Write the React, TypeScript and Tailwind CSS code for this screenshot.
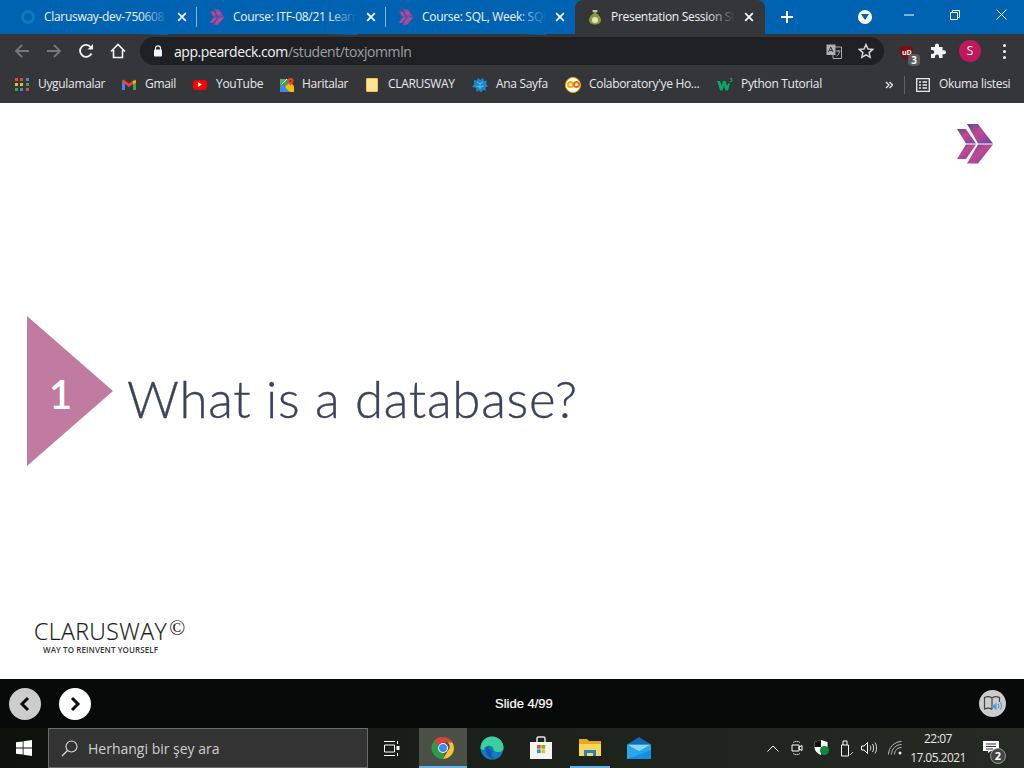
import React from "react";

const ui = "font-['Open_Sans','Noto_Sans',sans-serif]";

function Chevrons({ w = 16, h = 16, id }: { w?: number; h?: number; id: string }) {
  return (
    <svg width={w} height={h} viewBox="0 0 36 40" className="shrink-0">
      <defs>
        <linearGradient id={id} x1="0" y1="0" x2="1" y2="1">
          <stop offset="0" stopColor="#5a4aa0" />
          <stop offset="0.45" stopColor="#c2488f" />
          <stop offset="0.6" stopColor="#a8479a" />
          <stop offset="1" stopColor="#6a4aa5" />
        </linearGradient>
      </defs>
      <path d="M0 5h9l10 14.600H9z" fill={`url(#${id})`} />
      <path d="M0 35h9l10-14.400H9z" fill={`url(#${id})`} />
      <path d="M10 0h11l15 19.600H21z" fill={`url(#${id})`} />
      <path d="M10 39.500h11l15-18.900H21z" fill={`url(#${id})`} />
    </svg>
  );
}

function X({ c = "#fff" }: { c?: string }) {
  return (
    <svg width="10" height="10" viewBox="0 0 10 10">
      <path d="M1.200 1.200l7.600 7.600M8.800 1.200L1.200 8.800" stroke={c} strokeWidth="1.700" />
    </svg>
  );
}

function Tab({ icon, title, active, fade }: { icon: React.ReactNode; title: string; active?: boolean; fade: string }) {
  return (
    <div className={`relative flex items-center h-[34px] pl-3 shrink-0 ${active ? "w-[190px] bg-[#35363a] rounded-t-lg" : "w-[189px]"}`}>
      <div className="w-4 h-4 flex items-center justify-center shrink-0">{icon}</div>
      <div className="relative w-[124px] ml-2 overflow-hidden whitespace-nowrap text-[12px] leading-[34px] text-[#f1f3f4] pb-px tracking-[-0.3px]">
        {title}
        <div className={`absolute right-0 top-0 bottom-0 w-7 ${fade}`} />
      </div>
      <div className="ml-[9px] w-[10px] h-[10px] flex items-center"><X /></div>
    </div>
  );
}

function Sep() {
  return <div className="w-px h-5 bg-[#8fb4d6] -ml-px shrink-0" />;
}

function TabStrip() {
  return (
    <div className="flex items-center h-[34px] bg-[#0063b1] pl-2">
      <Tab
        fade="bg-gradient-to-r from-transparent to-[#0063b1]"
        title="Clarusway-dev-750608"
        icon={<div className="w-[14px] h-[14px] rounded-full border-[3px] border-[#1278bd] bg-transparent" />}
      />
      <Sep />
      <Tab fade="bg-gradient-to-r from-transparent to-[#0063b1]" title="Course: ITF-08/21 Learn" icon={<Chevrons id="t1" />} />
      <Sep />
      <Tab fade="bg-gradient-to-r from-transparent to-[#0063b1]" title="Course: SQL, Week: SQL" icon={<Chevrons id="t2" />} />
      <Tab
        active
        fade="bg-gradient-to-r from-transparent to-[#35363a]"
        title="Presentation Session Stu"
        icon={
          <svg width="14" height="16" viewBox="0 0 14 16">
            <path d="M5 1h4L8.400 4.400C11 6 13 8.500 13 11c0 3-2.600 4.500-6 4.500S1 14 1 11c0-2.500 2-5 4.600-6.600z" fill="#8a9a3c" />
            <circle cx="7" cy="11" r="3" fill="#e8e4b0" />
            <path d="M4.500 2h5" stroke="#d8d8c8" strokeWidth="1.400" />
          </svg>
        }
      />
      <div className="ml-[15px] w-[14px] h-[14px] flex items-center justify-center">
        <svg width="14" height="14" viewBox="0 0 14 14"><path d="M7 1v12M1 7h12" stroke="#fff" strokeWidth="2" /></svg>
      </div>
      <div className="ml-[64px] w-[14px] h-[14px] rounded-full bg-white flex items-center justify-center">
        <svg width="8" height="6" viewBox="0 0 8 6"><path d="M0 0h8L4 6z" fill="#0063b1" /></svg>
      </div>
      <div className="ml-[14px] flex self-stretch">
        <div className="w-[46px] flex items-center justify-center pb-[5px]">
          <svg width="10" height="10" viewBox="0 0 10 10"><path d="M0 5h10" stroke="#fff" /></svg>
        </div>
        <div className="w-[46px] flex items-center justify-center pb-[5px]">
          <svg width="10" height="10" viewBox="0 0 10 10" fill="none"><path d="M.5 2.500h7v7h-7zM2.500 2.500v-2h7v7h-2" stroke="#fff" /></svg>
        </div>
        <div className="w-[46px] flex items-center justify-center pb-[5px]">
          <svg width="11" height="11" viewBox="0 0 11 11"><path d="M.5.5l10 10M10.500.5l-10 10" stroke="#fff" /></svg>
        </div>
      </div>
    </div>
  );
}

function Toolbar() {
  return (
    <div className="flex items-center h-[34px] bg-[#35363a] pl-[6px]">
      <div className="w-8 flex justify-center">
        <svg width="16" height="16" viewBox="0 0 16 16" fill="none"><path d="M15 8H2M8 2L2 8l6 6" stroke="#75777a" strokeWidth="1.800" /></svg>
      </div>
      <div className="w-8 flex justify-center">
        <svg width="16" height="16" viewBox="0 0 16 16" fill="none"><path d="M1 8h13M8 2l6 6-6 6" stroke="#75777a" strokeWidth="1.800" /></svg>
      </div>
      <div className="w-8 flex justify-center">
        <svg width="16" height="16" viewBox="0 0 16 16" fill="none"><path d="M13.500 10.500A6 6 0 1 1 13 4.500" stroke="#f1f3f4" strokeWidth="1.800" /><path d="M15 1v5.500H9.500z" fill="#f1f3f4" /></svg>
      </div>
      <div className="w-8 flex justify-center">
        <svg width="16" height="16" viewBox="0 0 16 16" fill="none"><path d="M1 8.500L8 1.500l7 7M3.500 7v7.500h9V7" stroke="#f1f3f4" strokeWidth="1.600" /></svg>
      </div>
      <div className="ml-[6px] w-[744px] h-7 rounded-full bg-[#202124] flex items-center pl-[13px]">
        <svg width="10" height="12" viewBox="0 0 10 12" className="shrink-0">
          <path d="M2.500 5V3.300a2.500 2.500 0 0 1 5 0V5" stroke="#f1f3f4" strokeWidth="1.200" fill="none" />
          <rect x="1" y="4.500" width="8" height="7" rx="1" fill="#f1f3f4" />
        </svg>
        <div className="ml-[11px] text-[14px] text-[#f1f3f4] whitespace-nowrap tracking-[-0.43px]">
          app.peardeck.com<span className="text-[#9aa0a6]">/student/toxjommln</span>
        </div>
        <div className="ml-auto flex items-center">
          <svg width="16" height="15" viewBox="0 0 16 15" fill="none">
            <path d="M7 3h8.500v11.500H7z" stroke="#a8abae" />
            <rect x=".5" y=".5" width="9" height="10.500" fill="#aeb0b3" />
            <path d="M2.500 8l2.300-5L7 8M3.400 6.500h3" stroke="#35363a" />
            <path d="M10 7h4.500M12.200 6v1.500M10.500 12c2-1 2.500-2.500 3-4.500" stroke="#a8abae" />
          </svg>
          <div className="ml-4 mr-[10px]">
            <svg width="16" height="16" viewBox="0 0 16 16" fill="none"><path d="M8 1.500l2 4.500 4.800.4-3.700 3.200 1.100 4.800L8 11.900l-4.200 2.500 1.100-4.800L1.200 6.400 6 6z" stroke="#dadce0" strokeWidth="1.400" /></svg>
          </div>
        </div>
      </div>
      <div className="ml-[14px] mt-[6px] relative w-[16px] h-[18px] shrink-0">
        <svg width="15" height="15" viewBox="0 0 16 17" className="ml-px"><path d="M8 .5l7 2v6c0 4-3.500 6.500-7 8-3.500-1.500-7-4-7-8v-6z" fill="#7b0f12" /></svg>
        <div className="absolute left-[4px] top-[4px] text-[7px] leading-[7px] font-bold text-white">uD</div>
        <div className="absolute left-[10px] top-[9px] w-3 h-3 rounded-sm bg-[#5a5b5e] text-[10px] leading-3 font-bold text-white text-center">3</div>
      </div>
      <div className="ml-[16px] shrink-0">
        <svg width="16" height="16" viewBox="0 0 16 16"><path d="M5 2.500a2 2 0 0 1 4 0V4h3.500v3.300H14a2 2 0 0 1 0 4h-1.500V15H9v-1.500a2 2 0 0 0-4 0V15H1v-4h1.300a2 2 0 0 0 0-4H1V4h4z" fill="#f1f3f4" /></svg>
      </div>
      <div className="ml-[13px] w-[22px] h-[22px] rounded-full bg-[#c2185b] text-white text-[12px] leading-[22px] text-center shrink-0">S</div>
      <div className="ml-[22px] flex flex-col gap-[3px] shrink-0">
        <div className="w-[3px] h-[3px] rounded-full bg-[#f1f3f4]" />
        <div className="w-[3px] h-[3px] rounded-full bg-[#f1f3f4]" />
        <div className="w-[3px] h-[3px] rounded-full bg-[#f1f3f4]" />
      </div>
    </div>
  );
}

function Bm({ icon, label, w }: { icon: React.ReactNode; label: string; w: string }) {
  return (
    <div className={`flex items-center shrink-0 ${w}`}>
      {icon}
      <span className="whitespace-nowrap text-[12px] leading-[16px] -mt-[2px] text-[#e8eaed] tracking-[-0.32px]">{label}</span>
    </div>
  );
}

function Bookmarks() {
  const dots = ["#ea4335", "#ea4335", "#4285f4", "#fbbc05", "#fbbc05", "#34a853", "#34a853", "#4285f4", "#ea4335"];
  return (
    <div className="flex items-center h-[35px] bg-[#35363a] pl-[15px] pb-[2px]">
      <Bm
        w="w-[107px]"
        label="Uygulamalar"
        icon={
          <div className="grid grid-cols-3 gap-[2px] w-[14px] h-[14px] mr-[9px]">
            {dots.map((c, i) => <div key={i} className="w-[3px] h-[3px]" style={{ background: c }} />)}
          </div>
        }
      />
      <Bm
        w="w-[71px]"
        label="Gmail"
        icon={
          <svg width="14" height="12" viewBox="0 0 14 12" className="mr-[9px]">
            <path d="M0 1.500V11h3V5l4 3 4-3v6h3V1.500L12.500.5 7 4.500 1.500.5z" fill="#ea4335" />
            <path d="M0 3v8h3V5z" fill="#4285f4" />
            <path d="M14 3v8h-3V5z" fill="#34a853" />
            <path d="M11 2.300l3-1v2L11 5.500z" fill="#fbbc05" />
          </svg>
        }
      />
      <Bm
        w="w-[87px]"
        label="YouTube"
        icon={
          <div className="w-[14px] h-[10px] rounded-[3px] bg-[#f00] flex items-center justify-center mr-[9px]">
            <svg width="4" height="5" viewBox="0 0 4 5"><path d="M0 0l4 2.500L0 5z" fill="#fff" /></svg>
          </div>
        }
      />
      <Bm
        w="w-[86px]"
        label="Haritalar"
        icon={
          <svg width="14" height="14" viewBox="0 0 14 14" className="mr-2">
            <path d="M0 1h10v13H0z" fill="#34a853" />
            <path d="M0 14V6l5 3 5 5z" fill="#4285f4" />
            <path d="M5 9l5-5 4 4v6h-4z" fill="#fbbc05" />
            <path d="M0 6l6-5H0z" fill="#4db36a" />
            <path d="M1.500 6.500L7 1" stroke="#e8eaed" />
            <path d="M10.500 0a3 3 0 0 1 3 3c0 2-3 4.500-3 4.500S7.500 5 7.500 3a3 3 0 0 1 3-3z" fill="#ea4335" />
            <circle cx="10.500" cy="3" r="1" fill="#8a1c12" />
          </svg>
        }
      />
      <Bm
        w="w-[106px]"
        label="CLARUSWAY"
        icon={<div className="w-[12px] h-[14px] bg-[#fde293] border border-[#f0c34e] rounded-[1px] mr-[10px]" />}
      />
      <Bm
        w="w-[93px]"
        label="Ana Sayfa"
        icon={
          <svg width="16" height="16" viewBox="0 0 16 16" className="mr-2">
            <path d="M2 3l3 .5L6 1l2.500 2L11 1l1 3 3-.5-1 3.500 2 2-2.500 1.500.5 3-3-.5-2 2.500-2-2-3 1 .5-3.500L0 10l2-2.500z" fill="#1a86c8" />
            <path d="M5 5l3 2 3-2M8 7v5M4 9l4 1 4-1" stroke="#5cc0ee" fill="none" />
          </svg>
        }
      />
      <Bm
        w="w-[152px]"
        label="Colaboratory'ye Ho..."
        icon={
          <div className="w-4 h-4 rounded-full bg-[#fff] border border-[#f9ab00] flex items-center justify-center mr-2 shrink-0">
            <div className="w-[7px] h-[7px] rounded-full border-2 border-[#f9ab00] shrink-0" />
            <div className="w-[7px] h-[7px] -ml-px rounded-full border-2 border-[#e8710a] shrink-0" />
          </div>
        }
      />
      <Bm
        w="w-[168px]"
        label="Python Tutorial"
        icon={
          <div className="relative w-4 h-3 mr-2 shrink-0">
            <svg width="16" height="12" viewBox="0 0 16 12">
              <path d="M0 2h3l1.500 5L6 2h2.500l1.500 5 1-2.500h2L11 11.500H8.500L7 6.500l-1.500 5H3.200z" fill="#04aa6d" />
            </svg>
            <div className="absolute right-0 -top-[2px] text-[6px] leading-[6px] text-[#04aa6d] font-bold">3</div>
          </div>
        }
      />
      <svg width="8" height="8" viewBox="0 0 8 8" fill="none" className="shrink-0"><path d="M1 1l3 3-3 3M4.500 1l3 3-3 3" stroke="#e8eaed" strokeWidth="1.300" /></svg>
      <div className="w-px h-[18px] bg-[#5f6368] ml-[11px] shrink-0" />
      <svg width="14" height="14" viewBox="0 0 14 14" fill="none" className="ml-[11px] shrink-0">
        <path d="M.7.7h12.600v12.600H.7z" stroke="#e8eaed" strokeWidth="1.300" />
        <path d="M3 4h2M6.500 4H11M3 7h2M6.500 7H11M3 10h2M6.500 10H11" stroke="#e8eaed" strokeWidth="1.300" />
      </svg>
      <span className="ml-[9px] text-[12px] leading-[16px] -mt-[2px] text-[#e8eaed] whitespace-nowrap tracking-[-0.32px]">Okuma listesi</span>
    </div>
  );
}

function Slide() {
  return (
    <div className="h-[576px] bg-white flex flex-col">
      <div className="flex justify-end pr-[31px] pt-[21px]">
        <Chevrons w={36} h={40} id="big" />
      </div>
      <div className="flex items-start mt-[152px] pl-[27px]">
        <div className="w-[86px] h-[150px] bg-[#c27ba0] [clip-path:polygon(0_0,100%_50%,0_100%)] flex items-center pl-[22px] pt-[5px] shrink-0">
          <span className="text-white text-[40px] font-['Lato',sans-serif] font-semibold">1</span>
        </div>
        <div className="ml-[14px] mt-[48px] text-[51px] leading-[70px] font-light text-[#3c4257] whitespace-nowrap font-['Lato',sans-serif] tracking-[0.7px] [-webkit-text-stroke:0.35px_#3c4257]">
          What is a database?
        </div>
      </div>
      <div className="mt-[154px] pl-[34px] text-[#1a1a1a] font-['Open_Sans',sans-serif]">
        <div className="flex items-start h-[22px]">
          <span className="text-[23px] leading-[22px] font-light tracking-[0.45px] [-webkit-text-stroke:0.2px_#1a1a1a]">CLARUSWAY</span>
          <span className="ml-[2px] -mt-[3px] text-[21px] leading-[22px] font-['Liberation_Serif',serif]">©</span>
        </div>
        <div className="mt-[3px] ml-[9px] text-[8px] leading-[9px] font-semibold text-[#333] whitespace-nowrap tracking-[0.1px]">WAY TO REINVENT YOURSELF</div>
      </div>
    </div>
  );
}

function SlideBar() {
  return (
    <div className="h-[49px] bg-[#080a0a] flex items-center pl-[9px] pr-[18px]">
      <div className="w-8 h-8 rounded-full bg-[#cccccc] flex items-center justify-center">
        <svg width="12" height="16" viewBox="0 0 12 16" fill="none"><path d="M9 2L3 8l6 6" stroke="#0a0a0a" strokeWidth="3" /></svg>
      </div>
      <div className="w-8 h-8 ml-[18px] rounded-full bg-white flex items-center justify-center">
        <svg width="12" height="16" viewBox="0 0 12 16" fill="none"><path d="M3 2l6 6-6 6" stroke="#0a0a0a" strokeWidth="3" /></svg>
      </div>
      <div className="ml-[404px] text-[13px] text-white font-['Liberation_Sans',sans-serif] whitespace-nowrap [-webkit-text-stroke:0.2px_#fff]">Slide 4/99</div>
      <div className="ml-auto w-[27px] h-[27px] rounded-full bg-[#cccccc] flex items-center justify-center">
        <svg width="20" height="18" viewBox="0 0 20 18" fill="none">
          <path d="M9 3C7 1.500 4 1.500 1.500 2.500V14C4 13 7 13 9 14.500M9 3c2-1.500 5-1.500 7.500-.5V7M9 3v11.500" stroke="#444" strokeWidth="1.200" />
          <path d="M9 10h2l2.500-2.500v8L11 13H9z" fill="#4d9bd8" />
          <path d="M15 9c1 1 1 3 0 4M17 7.500c2 2 2 5 0 7" stroke="#4d9bd8" strokeWidth="1.200" />
        </svg>
      </div>
    </div>
  );
}

function Cell({ w, children, active }: { w: string; children: React.ReactNode; active?: boolean }) {
  return (
    <div className={`relative h-10 flex items-center justify-center shrink-0 ${w} ${active ? "bg-[#4a5046]" : ""}`}>
      {children}
    </div>
  );
}

function Underline({ w }: { w: string }) {
  return <div className={`absolute bottom-0 left-1/2 -translate-x-1/2 h-[2px] bg-[#63b1ea] ${w}`} />;
}

function Taskbar() {
  return (
    <div className={`h-10 flex items-center bg-gradient-to-r from-[#0d120c] via-[#1c2119] to-[#262a24] ${ui}`}>
      <div className="w-12 flex justify-center shrink-0">
        <svg width="16" height="16" viewBox="0 0 16 16"><path d="M0 2.300l6.700-.9v6.200H0zM7.500 1.300L16 0v7.600H7.500zM0 8.400h6.700v6.200L0 13.700zM7.500 8.400H16V16l-8.500-1.300z" fill="#fff" /></svg>
      </div>
      <div className="w-[320px] h-10 bg-[#333333] border border-[#6b6b6b] flex items-center pl-3 shrink-0">
        <svg width="17" height="17" viewBox="0 0 17 17" fill="none"><circle cx="10.500" cy="6.500" r="5.500" stroke="#ddd" strokeWidth="1.100" /><path d="M6.500 10.500L1 16" stroke="#ddd" strokeWidth="1.300" /></svg>
        <span className="ml-[10px] text-[14px] text-[#cfcfcf] whitespace-nowrap">Herhangi bir şey ara</span>
      </div>
      <div className="w-[51px] flex justify-center pr-[3px] shrink-0">
        <svg width="16" height="15" viewBox="0 0 16 15" fill="none"><path d="M0 .5h11M0 14.500h11M.5 4h10v7H.5z" stroke="#fff" /><path d="M13.500 0v3M13.500 12v3" stroke="#fff" /><rect x="12.500" y="5" width="3" height="4" fill="#fff" /></svg>
      </div>
      <Cell w="w-12" active>
        <svg width="24" height="24" viewBox="0 0 24 24">
          <path d="M12 1a11 11 0 0 1 9.500 5.500H12a5.500 5.500 0 0 0-5.200 3.700L3.500 4.500A11 11 0 0 1 12 1z" fill="#db4437" />
          <path d="M21.500 6.500A11 11 0 0 1 12 23l4.800-8.200a5.500 5.500 0 0 0 0-8.300z" fill="#fbc02d" />
          <path d="M12 23A11 11 0 0 1 3.500 4.500l4.700 8.200a5.500 5.500 0 0 0 5.800 4.400z" fill="#2e9b47" />
          <circle cx="12" cy="12" r="5" fill="#fff" />
          <circle cx="12" cy="12" r="4" fill="#4285f4" />
        </svg>
        <Underline w="w-12" />
      </Cell>
      <Cell w="w-[49px]">
        <svg width="24" height="24" viewBox="0 0 24 24">
          <circle cx="12" cy="12" r="11.500" fill="#0f7dc2" />
          <path d="M.5 12C1 5 6 .5 12 .5 18.500.500 23.500 5.500 23.500 12c0 2.500-2.500 4-5.500 4-3 0-4.500-1.500-4.500-2.500 0-3-3-4.500-6-3.500C5 10.700 4 12 4 14 1.500 14 .5 13 .5 12z" fill="#3bcf9a" />
          <path d="M13 15c-4-.5-5-3-4.500-5-2.500 1-3.500 3.500-2.500 6.500 1 3 4 6 9 6.500-4-2-4.500-5.500-2-8z" fill="#1556a8" />
        </svg>
      </Cell>
      <Cell w="w-[50px]">
        <svg width="24" height="24" viewBox="0 0 24 24">
          <path d="M8 6V2.500A1.500 1.500 0 0 1 9.500 1h5A1.500 1.500 0 0 1 16 2.500V6" fill="none" stroke="#e8e8e8" strokeWidth="1.500" />
          <path d="M1 6h22v17H1z" fill="#f4f4f4" />
          <path d="M8 9h3.700v3.700H8z" fill="#f25022" />
          <path d="M12.400 9h3.700v3.700h-3.700z" fill="#7fba00" />
          <path d="M8 13.400h3.700v3.700H8z" fill="#00a4ef" />
          <path d="M12.400 13.400h3.700v3.700h-3.700z" fill="#ffb900" />
        </svg>
      </Cell>
      <Cell w="w-[48px]">
        <svg width="22" height="20" viewBox="0 0 22 20">
          <path d="M0 1h8l2 2h12v15H0z" fill="#e6a91e" />
          <path d="M0 6h22v12H0z" fill="#fbd55c" />
          <path d="M5 12h12v6h-3v-3H8v3H5z" fill="#2b7fc4" />
        </svg>
        <Underline w="w-10" />
      </Cell>
      <Cell w="w-[49px]">
        <svg width="24" height="22" viewBox="0 0 24 22">
          <path d="M12 0l12 7.500H0z" fill="#0f6cbd" />
          <path d="M0 7.500l12 7 12-7V22H0z" fill="#28a8ea" />
          <path d="M0 7.500h24L12 14.500z" fill="#7fdcf7" />
          <path d="M0 22l24-9v9z" fill="#1490df" />
        </svg>
      </Cell>
      <div className="ml-[104px] flex items-center shrink-0">
        <svg width="12" height="7" viewBox="0 0 12 7" fill="none"><path d="M.5 6.500L6 1l5.500 5.500" stroke="#fff" /></svg>
        <svg width="12" height="16" viewBox="0 0 12 16" fill="none" className="ml-[12px]"><path d="M1 5h7v6H1zM8 7l3-1.500v5L8 9z" stroke="#fff" /><path d="M2 2.500C4 1 7 1 9 2.500M2 13.500c2 1.500 5 1.500 7 0" stroke="#bbb" /></svg>
        <div className="relative ml-[11px] w-[16px] h-[16px]">
          <svg width="14" height="15" viewBox="0 0 14 15"><path d="M7 0l6.500 2v5c0 4-3 6.500-6.500 8C3.500 13.500.500 11 .500 7V2z" fill="#fff" /><path d="M7 0v7H.5V2zM7 7h6.500c0 4-3 6.500-6.500 8z" fill="#111" /></svg>
          <div className="absolute left-[6px] top-[6px] w-[9px] h-[9px] rounded-full bg-[#10893e]" />
        </div>
        <svg width="14" height="17" viewBox="0 0 14 17" fill="none" className="ml-[10px]"><path d="M1.500 5h7v11h-7zM3 5V1h4v4" stroke="#fff" /><path d="M10 15l3-3" stroke="#bbb" /></svg>
        <svg width="16" height="12" viewBox="0 0 16 12" fill="none" className="ml-[7px]"><path d="M.5 4h2.500L6.500.5v11L3 8H.5z" stroke="#fff" /><path d="M9 3.500c1 1.500 1 3.500 0 5M11.500 2c1.500 2.500 1.500 5.500 0 8M14 .5c2 3 2 8 0 11" stroke="#ddd" /></svg>
        <svg width="14" height="14" viewBox="0 0 14 14" fill="none" className="ml-[11px]"><path d="M.5 13.500C.5 6.500 6.500.5 13.500.5M3.500 13.500c0-5.500 4.500-10 10-10M6.500 13.500c0-4 3-7 7-7" stroke="#bbb" /><circle cx="12" cy="12" r="1.500" fill="#eee" /></svg>
      </div>
      <div className="ml-[2px] w-[68px] text-center text-[#e6e6e6] text-[12px] leading-[19px] shrink-0 tracking-[-0.55px]">
        <div>22:07</div>
        <div>17.05.2021</div>
      </div>
      <div className="relative ml-[11px] w-[18px] h-[16px] shrink-0">
        <svg width="16" height="12" viewBox="0 0 16 12" className="mt-px"><path d="M0 0h16v10h-8l-3 2v-2H0z" fill="#fff" /><path d="M3 3h10M3 5.500h10M3 8h7" stroke="#333" /></svg>
        <div className="absolute left-[7px] top-[8px] w-4 h-4 rounded-full bg-[#444] border border-[#999] text-[11px] leading-[14px] text-white text-center font-bold">2</div>
      </div>
    </div>
  );
}

export default function App() {
  return (
    <div className={`w-[1024px] h-[768px] overflow-hidden ${ui}`}>
      <TabStrip />
      <Toolbar />
      <Bookmarks />
      <Slide />
      <SlideBar />
      <Taskbar />
    </div>
  );
}
